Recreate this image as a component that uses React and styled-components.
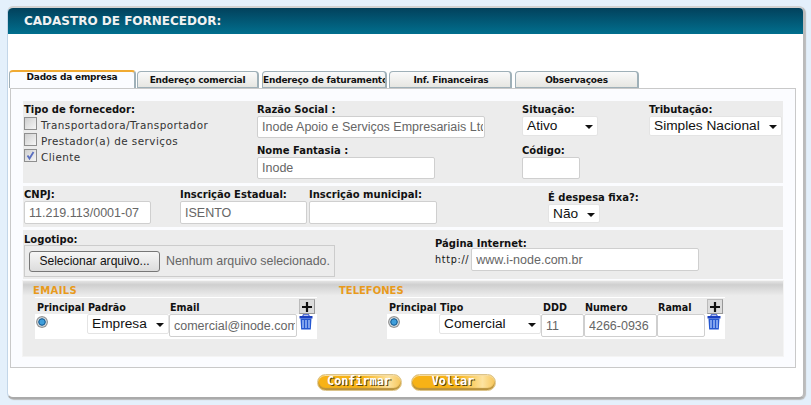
import React from "react";
import styled, { createGlobalStyle } from "styled-components";

const Global = createGlobalStyle`
  html, body { margin: 0; padding: 0; background: #e4f0fb; }
  * { box-sizing: border-box; }
`;
const Page = styled.div`
  width: 811px; height: 405px; padding: 6px 6px 6px 7px; overflow: hidden;
  font-family: "DejaVu Sans", sans-serif;
`;
const Card = styled.div`
  height: 393px; background: #fff; border-style: solid; border-color: #d2d2d2; border-width: 2px 2px 2px 1px;
  border-left-color: #c3d6e8; border-bottom-color: #aaa; border-right-color: #bbb; border-radius: 6px; overflow: hidden;
  box-shadow: 1px 1px 1px #bbb;
`;
const Header = styled.div`
  height: 26px; background: linear-gradient(#02415c, #016f8e); color: #f2f2f2;
  font: bold 12px/15px "DejaVu Sans", sans-serif; padding: 6px 0 0 16px;
`;
const Tabs = styled.div`
  display: flex; margin: 36px 0 0 1px; height: 18px; align-items: flex-end; position: relative; z-index: 1;
`;
const Tab = styled.div`
  flex: none; width: ${p => p.$w}px; height: ${p => p.$active ? 18 : 17}px; margin-left: ${p => p.$ml || 0}px;
  overflow: hidden; white-space: nowrap; padding-left: ${p => p.$pl || 0}px;
  text-align: ${p => p.$left ? "left" : "center"};
  font: bold 9px/${p => p.$active ? 11 : 16}px "DejaVu Sans", sans-serif; letter-spacing: -.2px; color: #111;
  border-style: solid; border-color: #9fb0b8; border-width: ${p => p.$active ? "2px 2px 0 1px" : "1px 2px 1px 1px"};
  border-top-color: ${p => p.$active ? "#f0aa33" : "#9fb0b8"};
  border-radius: 4px 4px 0 0;
  background: ${p => p.$active ? "#fbfcff" : "linear-gradient(#fafafa, #e6e6e2)"};
`;
const Panel = styled.div`
  margin: 0 0 0 2px; width: 786px; height: 280px; background: #fbfcff; border: 1px solid #c9c9c9;
  padding: 12px 12px 0 12px;
`;
const Section = styled.div`
  background: #ececec; margin-bottom: 3px; width: 760px; height: ${p => p.$h}px;
  display: grid; grid-template-columns: ${p => p.$cols}; padding: 3px 0 0 1px;
`;
const Col = styled.div`display: flex; flex-direction: column;`;
const Label = styled.div`
  font: bold 10px/12px "DejaVu Sans", sans-serif; color: #111; white-space: nowrap;
  height: ${p => p.$h || 12}px; margin-top: ${p => p.$mt || 0}px;
`;
const Input = styled.input`
  display: block; width: ${p => p.$w}px; height: ${p => p.$h || 22}px; border: 1px solid #cfcfcf; border-radius: 2px;
  background: #fff; color: #666; font: 12.5px "Liberation Sans", sans-serif; padding: 0 1px 0 4px; outline: 0;
  text-align: left; margin: 0; flex: none;
`;
const FakeSelect = styled.div`
  width: ${p => p.$w}px; height: ${p => p.$h || 20}px; background: #fff; border: 1px solid #e4e4e4; border-radius: 2px;
  font: 13.7px/18px "Liberation Sans", sans-serif; color: #111; padding-left: 4px; position: relative; white-space: nowrap;
  &::after { content: ""; position: absolute; right: 4px; top: 8px; border: 4px solid transparent; border-top: 4px solid #111; border-bottom: 0; }
`;
const CheckRow = styled.div`
  display: flex; align-items: flex-start; height: 16px; font: 10.4px/16px "DejaVu Sans", sans-serif; color: #333; letter-spacing: .45px;
`;
const Check = styled.span`
  width: 13px; height: 13px; border: 1px solid #8f8f8f; background: linear-gradient(135deg, #cfcfcf, #f6f6f6);
  margin-right: 4px; flex: none; display: flex; align-items: center; justify-content: center;
`;
const Stack = styled.div`display: flex; flex-direction: column;`;
const FileBox = styled.div`
  width: 311px; height: 32px; border: 1px solid #ccc; display: flex; align-items: center; padding-left: 4px; gap: 6px;
  font: 12.4px "Liberation Sans", sans-serif; color: #666; white-space: nowrap;
`;
const FileBtn = styled.div`
  width: 131px; height: 21px; border: 1px solid #777; border-radius: 3px; background: linear-gradient(#f6f6f6, #dcdcdc);
  color: #111; font: 12.1px/19px "Liberation Sans", sans-serif; text-align: center;
`;
const UrlRow = styled.div`
  display: flex; align-items: center; font: 9.6px "DejaVu Sans", sans-serif; color: #111; gap: 2px; letter-spacing: .7px;
`;
const Contacts = styled.div`
  width: 762px; height: 77px; margin: -2px 0 0 -1px; border: 1px solid #f4f4f4; background: #ececec;
`;
const ContactHead = styled.div`
  height: 15px; background: linear-gradient(#e4e4e4, #cfcfcf 25%, #ededed);
  font: bold 10px/11px "DejaVu Sans", sans-serif; color: #e89a1c; display: flex; padding-top: 4px;
`;
const HeadLabel = styled.span`
  width: ${p => p.$w}px; padding-left: ${p => p.$pl || 0}px; flex: none; letter-spacing: ${p => p.$ls || 0}px;
`;
const Tables = styled.div`display: flex; padding: 1px 0 0 12px;`;
const Table = styled.div`
  width: ${p => p.$w}px; height: 42px; margin-right: ${p => p.$mr || 0}px; background: #fff; flex: none; padding-top: 1px;
`;
const THead = styled.div`
  display: flex; height: 16px; background: #ececec; font: bold 9.6px/13px "DejaVu Sans", sans-serif; color: #111; padding-top: 3px;
`;
const TCell = styled.div`width: ${p => p.$w}px; flex: none; white-space: nowrap; padding-left: ${p => p.$pl ?? 0}px;`;
const TRow = styled.div`display: flex; align-items: flex-start;`;
const Radio = styled.span`
  display: block; width: 12px; height: 12px; margin: 2px 0 0 1px; border-radius: 50%;
  background: radial-gradient(closest-side, #3f9fdc 0 35%, #0b4f86 55%, #dfe9ee 68%, #8c8c8c 88%, #aaa);
`;
const Plus = styled.div`
  width: 16px; height: 15px; margin-top: -2px; background: #dcdcdc; border: 1px solid #bbb;
  border-right-color: #999; border-bottom-color: #999;
  display: flex; align-items: center; justify-content: center;
`;
const Footer = styled.div`display: flex; justify-content: center; gap: 9px; margin: 6px 0 0 1px;`;
const Btn = styled.div`
  width: 85px; height: 17px; border-radius: 9px; border: 1px solid #dcc48a;
  background: linear-gradient(90deg, #f7b216 0 55%, #fde3a0 85%, #f7c65a);
  box-shadow: inset 0 -2px 1px #b9923c, inset 0 1px 0 #f7dca0;
  color: #fff; font: bold 11.8px/13px "DejaVu Sans Mono", monospace; text-align: center; text-shadow: 1px 1px 0 #5b4510;
`;

const Trash = () => (
  <svg width="14" height="16" viewBox="0 0 14 16" style={{ display: "block" }}>
    <path d="M0.5 2h13v2.5H0.5z" fill="#1a3fc0" />
    <path d="M4 2V0.8h6V2" fill="none" stroke="#1a3fc0" />
    <path d="M1.5 4.5h11l-.7 11H2.2z" fill="#2457d0" />
    <path d="M4 6v8M7 6v8M10 6v8" stroke="#bcd4ff" strokeWidth="1.2" />
  </svg>
);
const PlusIcon = () => (
  <svg width="10" height="10" viewBox="0 0 10 10"><path d="M5 0v10M0 5h10" stroke="#111" strokeWidth="2.2" /></svg>
);
const Tick = () => (
  <svg width="11" height="11" viewBox="0 0 11 11"><path d="M2.5 5.5l2 3L8.5 2" fill="none" stroke="#5a6fc0" strokeWidth="1.8" /></svg>
);

export default function App() {
  return (
    <Page>
      <Global />
      <Card>
        <Header>CADASTRO DE FORNECEDOR:</Header>
        <Tabs>
          <Tab $active $w={127}>Dados da empresa</Tab>
          <Tab $w={122} $ml={1}>Endereço comercial</Tab>
          <Tab $w={125} $ml={3} $left>Endereço de faturamento</Tab>
          <Tab $w={123} $ml={2} $pl={2}>Inf. Financeiras</Tab>
          <Tab $w={124} $ml={3}>Observaçoes</Tab>
        </Tabs>
        <Panel>
          <Section $h={82} $cols="233px 265px 127px 134px">
            <Col>
              <Label $h={13}>Tipo de fornecedor:</Label>
              <Stack>
                <CheckRow><Check />Transportadora/Transportador</CheckRow>
                <CheckRow><Check />Prestador(a) de serviços</CheckRow>
                <CheckRow><Check><Tick /></Check>Cliente</CheckRow>
              </Stack>
            </Col>
            <Col>
              <Label>Razão Social :</Label>
              <Input $w={228} readOnly value="Inode Apoio e Serviços Empresariais Ltda" />
              <Label $mt={7}>Nome Fantasia :</Label>
              <Input $w={178} readOnly value="Inode" />
            </Col>
            <Col>
              <Label>Situação:</Label>
              <FakeSelect $w={76}>Ativo</FakeSelect>
              <Label $mt={9}>Código:</Label>
              <Input $w={58} readOnly value="" />
            </Col>
            <Col>
              <Label>Tributação:</Label>
              <FakeSelect $w={133}>Simples Nacional</FakeSelect>
            </Col>
          </Section>
          <Section $h={41} $cols="156px 129px 239px 230px">
            <Col><Label>CNPJ:</Label><Input $w={127} $h={23} readOnly value="11.219.113/0001-07" /></Col>
            <Col><Label>Inscrição Estadual:</Label><Input $w={127} $h={23} readOnly value="ISENTO" /></Col>
            <Col><Label>Inscrição municipal:</Label><Input $w={128} $h={23} readOnly value="" /></Col>
            <Col><Label $mt={3}>É despesa fixa?:</Label><FakeSelect $w={52} $h={19}>Não</FakeSelect></Col>
          </Section>
          <Section $h={49} $cols="411px 349px">
            <Col>
              <Label $h={11} $mt={1}>Logotipo:</Label>
              <FileBox><FileBtn>Selecionar arquivo...</FileBtn>Nenhum arquivo selecionado.</FileBox>
            </Col>
            <Col>
              <Label $h={10} $mt={5}>Página Internet:</Label>
              <UrlRow>http://<Input $w={228} $h={23} readOnly value="www.i-node.com.br" /></UrlRow>
            </Col>
          </Section>
          <Contacts>
            <ContactHead>
              <HeadLabel $w={316} $pl={10} $ls={0.4}>EMAILS</HeadLabel>
              <HeadLabel $w={200}>TELEFONES</HeadLabel>
            </ContactHead>
            <Tables>
              <Table $w={282} $mr={70}>
                <THead>
                  <TCell $w={52} $pl={2}>Principal</TCell>
                  <TCell $w={82} $pl={1}>Padrão</TCell>
                  <TCell $w={130} $pl={1}>Email</TCell>
                  <TCell $w={17}><Plus><PlusIcon /></Plus></TCell>
                </THead>
                <TRow>
                  <TCell $w={52}><Radio /></TCell>
                  <TCell $w={82}><FakeSelect $w={82}>Empresa</FakeSelect></TCell>
                  <TCell $w={130}><Input $w={128} $h={23} readOnly value="comercial@inode.com.br" /></TCell>
                  <TCell $w={17}><Trash /></TCell>
                </TRow>
              </Table>
              <Table $w={338}>
                <THead>
                  <TCell $w={52} $pl={2}>Principal</TCell>
                  <TCell $w={102} $pl={1}>Tipo</TCell>
                  <TCell $w={43} $pl={2}>DDD</TCell>
                  <TCell $w={73} $pl={1}>Numero</TCell>
                  <TCell $w={50} $pl={1}>Ramal</TCell>
                  <TCell $w={17}><Plus><PlusIcon /></Plus></TCell>
                </THead>
                <TRow>
                  <TCell $w={52}><Radio /></TCell>
                  <TCell $w={102}><FakeSelect $w={102}>Comercial</FakeSelect></TCell>
                  <TCell $w={43}><Input $w={43} $h={23} readOnly value="11" /></TCell>
                  <TCell $w={73}><Input $w={73} $h={23} readOnly value="4266-0936" /></TCell>
                  <TCell $w={50}><Input $w={48} $h={23} readOnly value="" /></TCell>
                  <TCell $w={17}><Trash /></TCell>
                </TRow>
              </Table>
            </Tables>
          </Contacts>
        </Panel>
        <Footer><Btn>Confirmar</Btn><Btn>Voltar</Btn></Footer>
      </Card>
    </Page>
  );
}
